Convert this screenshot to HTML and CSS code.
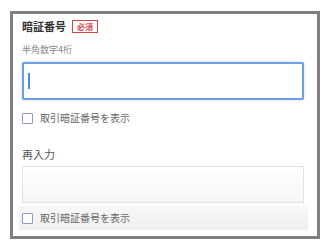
FILE: index.html
```html
<!DOCTYPE html>
<html lang="ja">
  <head>
    <meta charset="UTF-8" />
    <meta name="viewport" content="width=device-width, initial-scale=1.0" />
    <title>暗証番号</title>
    <link rel="stylesheet" href="styles.css">
  </head>
  <body>
    <div class="frame">
      <div class="field-head">
        <span class="field-title">暗証番号</span>
        <span class="badge">必須</span>
      </div>
      <p class="hint">半角数字4桁</p>
      <div class="input is-focused"><span class="caret"></span></div>
      <label class="check">
        <span class="box"></span>
        <span class="check-text">取引暗証番号を表示</span>
      </label>

      <p class="sub-label">再入力</p>
      <div class="input is-plain"></div>
      <div class="check-band">
        <label class="check">
          <span class="box"></span>
          <span class="check-text">取引暗証番号を表示</span>
        </label>
      </div>
    </div>
  </body>
</html>
```

FILE: styles.css
```css
* {
  margin: 0;
  padding: 0;
  box-sizing: border-box;
}

body {
  background-color: white;
  font-family: "Noto Sans CJK JP", "Noto Sans", sans-serif;
  color: #333;
}

.frame {
  width: 310px;
  height: 228px;
  margin: 11px 0 0 10px;
  padding: 4px 13px 0 9px;
  border: 3px solid #808080;
  background-color: white;
}

.field-head {
  display: flex;
  align-items: center;
  height: 16px;
}

.field-title {
  font-size: 11px;
  font-weight: bold;
  line-height: 14px;
  color: #333;
}

.badge {
  margin-left: 6px;
  padding: 0 4px;
  height: 13px;
  border: 1px solid #d9454a;
  font-size: 8px;
  font-weight: bold;
  line-height: 11px;
  color: #d9454a;
}

.hint {
  margin-top: 10px;
  font-size: 9px;
  line-height: 12px;
  color: #888;
}

.input {
  display: flex;
  align-items: center;
  width: 282px;
  background-color: white;
}

.is-focused {
  height: 38px;
  margin-top: 6px;
  padding-left: 4px;
  border: 2px solid #6f9fe6;
  border-radius: 2px;
  box-shadow: 0 0 2px #a9c9f4;
}

.caret {
  display: block;
  width: 2px;
  height: 16px;
  background-color: #4b8de6;
}

.is-plain {
  height: 37px;
  margin-top: 5px;
  border: 1px solid #e3e3e3;
  background: linear-gradient(#ffffff, #f6f6f6);
}

.check {
  display: flex;
  align-items: center;
  height: 14px;
}

.frame > .check {
  margin-top: 11px;
}

.box {
  width: 11px;
  height: 11px;
  border: 1px solid #8d9cc4;
  border-radius: 1px;
  background-color: white;
}

.check-text {
  margin-left: 7px;
  font-size: 10px;
  line-height: 14px;
  color: #666;
}

.sub-label {
  margin-top: 22px;
  font-size: 11px;
  line-height: 14px;
  color: #555;
}

.check-band {
  display: flex;
  align-items: center;
  height: 24px;
  margin: 3px -4px 0 -3px;
  padding-left: 3px;
  background: linear-gradient(#f8f8f8, #eeeeee);
}
```
